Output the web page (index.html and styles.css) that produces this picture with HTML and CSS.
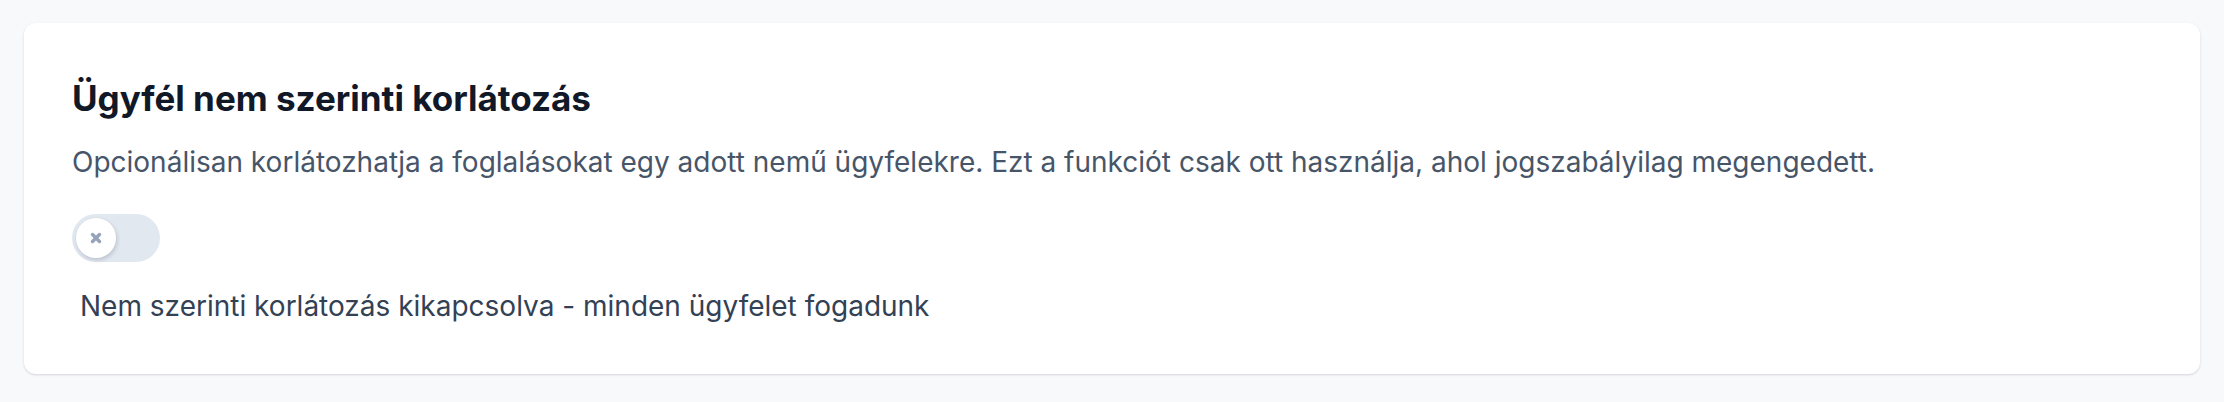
FILE: index.html
```html
<!DOCTYPE html>
<html lang="hu">

<head>
          <meta charset="UTF-8">
          <meta name="viewport" content="width=device-width, initial-scale=1.0">
          <title>Ügyfél nem szerinti korlátozás</title>
          <link rel="stylesheet" href="styles.css">
</head>

<body>
          <div class="page">
                    <section class="card">
                              <h2 class="cardTitle">Ügyfél nem szerinti korlátozás</h2>
                              <p class="cardText">Opcionálisan korlátozhatja a foglalásokat egy adott nemű ügyfelekre. Ezt a funkciót csak ott használja, ahol jogszabályilag megengedett.</p>

                              <label class="toggle">
                                        <input type="checkbox" class="toggleInput">
                                        <span class="toggleTrack">
                                                  <span class="toggleKnob">
                                                            <svg class="toggleIcon" viewBox="0 0 12 12" width="12" height="12">
                                                                      <path d="M2.5 2.5 L9.5 9.5 M9.5 2.5 L2.5 9.5" stroke="currentColor" stroke-width="3.4" stroke-linecap="round" fill="none" />
                                                            </svg>
                                                  </span>
                                        </span>
                              </label>

                              <p class="status">Nem szerinti korlátozás kikapcsolva - minden ügyfelet fogadunk</p>
                    </section>
          </div>
</body>

</html>
```

FILE: styles.css
```css
* {
          padding: 0;
          margin: 0;
          box-sizing: border-box;
}

body {
          background: #f8f9fb;
          font-family: Inter, "Noto Sans", sans-serif;
}

.page {
          padding: 23px 24px;
}

.card {
          background: #fff;
          border-radius: 12px;
          box-shadow: 0 1px 3px rgba(15, 23, 42, 0.1), 0 1px 2px rgba(15, 23, 42, 0.06);
          padding: 53px 48px 48px;
}

.cardTitle {
          font-size: 35px;
          font-weight: 700;
          line-height: 44px;
          color: #111827;
}

.cardText {
          margin-top: 22px;
          font-size: 28px;
          line-height: 40px;
          color: #475569;
}

.toggle {
          display: inline-block;
          margin-top: 32px;
          cursor: pointer;
}

.toggleInput {
          display: none;
}

.toggleTrack {
          display: flex;
          align-items: center;
          width: 88px;
          height: 48px;
          padding: 4px;
          border-radius: 24px;
          background: #e2e8f0;
}

.toggleKnob {
          display: flex;
          align-items: center;
          justify-content: center;
          width: 40px;
          height: 40px;
          border-radius: 50%;
          background: #fff;
          color: #94a3b8;
          box-shadow: 1px 2px 4px rgba(15, 23, 42, 0.18);
}

.status {
          margin-top: 24px;
          padding-left: 8px;
          font-size: 28px;
          line-height: 40px;
          color: #334155;
}
```
